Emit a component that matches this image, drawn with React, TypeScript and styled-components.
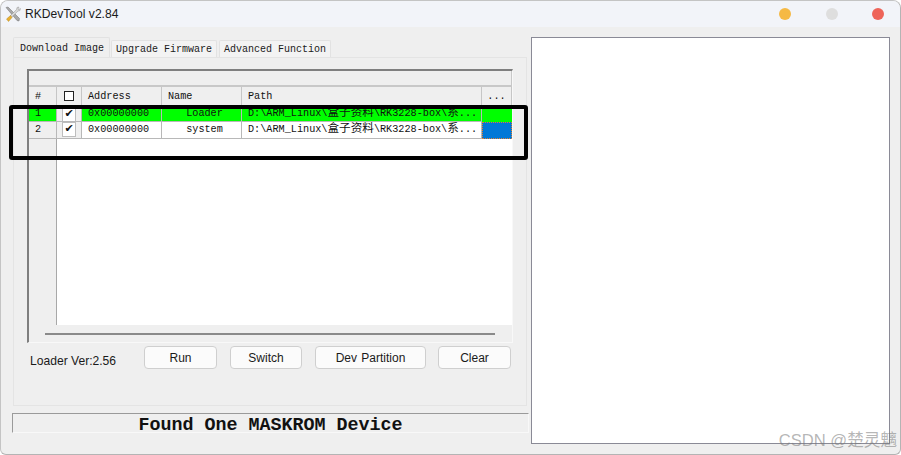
import { createGlobalStyle, styled } from "styled-components";

const COLUMNS = "28px 25px 80px 80px 240px 30px";

const rows = [
  { id: "1", address: "0x00000000", name: "Loader", active: true, height: 15 },
  { id: "2", address: "0x00000000", name: "system", active: false, height: 17 },
];

function App() {
  return (
    <>
      <GlobalStyle />
      <Window>
        <TitleBar>
          <AppIcon />
          <TitleText>RKDevTool v2.84</TitleText>
          <Lights>
            <Light $color="#f5b945" />
            <Light $color="#dedede" />
            <Light $color="#ee6459" />
          </Lights>
        </TitleBar>
        <Body>
          <LeftColumn>
            <TabStrip>
              <Tab $active>Download Image</Tab>
              <Tab>Upgrade Firmware</Tab>
              <Tab>Advanced Function</Tab>
            </TabStrip>
            <TabPanel>
              <Grid>
                <TopBand />
                <HeaderRow>
                  <HeaderCell>#</HeaderCell>
                  <HeaderCell $center>
                    <HeaderBox />
                  </HeaderCell>
                  <HeaderCell>Address</HeaderCell>
                  <HeaderCell>Name</HeaderCell>
                  <HeaderCell>Path</HeaderCell>
                  <HeaderCell $center>...</HeaderCell>
                </HeaderRow>
                {rows.map((row) => (
                  <DataRow key={row.id} $active={row.active} $height={row.height}>
                    <IndexCell $active={row.active}>{row.id}</IndexCell>
                    <CheckCell>
                      <CheckBox>✔</CheckBox>
                    </CheckCell>
                    <Cell>{row.address}</Cell>
                    <Cell $center>{row.name}</Cell>
                    <Cell>
                      D:\ARM_Linux\<Cjk>盒子资料</Cjk>\RK3228-box\<Cjk>系</Cjk>...
                    </Cell>
                    <PickCell $selected={!row.active} />
                  </DataRow>
                ))}
                <EmptyArea>
                  <EmptyGutter />
                </EmptyArea>
                <ScrollArea>
                  <ScrollThumb />
                </ScrollArea>
              </Grid>
              <ActionRow>
                <LoaderLabel>Loader Ver:2.56</LoaderLabel>
                <Button $width={73} $gap={0}>Run</Button>
                <Button $width={72} $gap={13}>Switch</Button>
                <Button $width={111} $gap={13}>Dev Partition</Button>
                <Button $width={73} $gap={12}>Clear</Button>
              </ActionRow>
            </TabPanel>
            <StatusBar>Found One MASKROM Device</StatusBar>
          </LeftColumn>
          <LogPanel />
        </Body>
        <Highlight />
        <Watermark>CSDN @楚灵魑</Watermark>
      </Window>
    </>
  );
}

function AppIcon() {
  return (
    <IconSvg viewBox="0 0 16 16">
      <path d="M1 1.5 L3 1 L14.5 12.5 L14 15 L12 14.5 Z" fill="#a8a8a8" stroke="#6e6e6e" strokeWidth="0.5" />
      <path d="M14 1 L12 1.5 L11.5 3.5 L5 10 L6.5 11.5 L13 5 L15 4.5 L15.5 2.5 L13.5 3.5 L13 3 Z" fill="#d6d6d6" stroke="#888" strokeWidth="0.4" />
      <path d="M5.5 9.5 L1.5 13 L3.5 15.5 L7 11.5 Z" fill="#e8b030" stroke="#a87c14" strokeWidth="0.4" />
    </IconSvg>
  );
}

export default App;

const GlobalStyle = createGlobalStyle`
  html, body {
    margin: 0;
    padding: 0;
    background: #ffffff;
    overflow: hidden;
  }
`;

const Window = styled.div`
  position: relative;
  width: 901px;
  height: 455px;
  box-sizing: border-box;
  background: #efefef;
  border: 1px solid #b4b4b4;
  border-top-color: #c4c4c4;
  border-left-color: #c4c4c4;
  border-radius: 8px 8px 6px 6px;
  overflow: hidden;
  font-family: "Liberation Sans", Arial, sans-serif;
`;

const TitleBar = styled.div`
  height: 26px;
  display: flex;
  align-items: center;
  padding-left: 4px;
  background: #f2f4f9;
`;

const IconSvg = styled.svg`
  width: 16px;
  height: 16px;
  flex: none;
`;

const TitleText = styled.span`
  margin-left: 4px;
  font-size: 12.1px;
  color: #1a1a1a;
`;

const Lights = styled.div`
  margin-left: auto;
  margin-right: 16px;
  display: flex;
  gap: 34.5px;
`;

const Light = styled.span<{ $color: string }>`
  width: 12px;
  height: 12px;
  border-radius: 50%;
  background: ${(p) => p.$color};
`;

const Body = styled.div`
  display: flex;
  align-items: flex-start;
  padding: 10px 11px 0 11px;
`;

const LeftColumn = styled.div`
  width: 517px;
  flex: none;
`;

const TabStrip = styled.div`
  display: flex;
  align-items: flex-end;
  height: 20px;
  padding-left: 1px;
  position: relative;
  z-index: 1;
`;

const Tab = styled.div<{ $active?: boolean }>`
  height: ${(p) => (p.$active ? 20 : 17)}px;
  box-sizing: border-box;
  padding: ${(p) => (p.$active ? "1px 5px 0 6px" : "1px 4px 0")};
  margin-right: ${(p) => (p.$active ? 1 : 2)}px;
  display: flex;
  align-items: center;
  font: 10px "Liberation Mono", monospace;
  color: #1a1a1a;
  white-space: nowrap;
  background: ${(p) => (p.$active ? "#efefef" : "#f3f3f3")};
  border: 1px solid #e2e2e2;
  border-bottom: none;
  border-radius: 2px 2px 0 0;
`;

const TabPanel = styled.div`
  width: 514px;
  height: 349px;
  box-sizing: border-box;
  margin-left: 1px;
  padding: 11px 13px 0 13px;
  border: 1px solid #e4e4e4;
  background: #efefef;
`;

const Grid = styled.div`
  width: 486px;
  height: 274px;
  box-sizing: border-box;
  display: flex;
  flex-direction: column;
  border-left: 2px solid #7f7f7f;
  border-top: 2px solid #7f7f7f;
  border-right: 1px solid #f8f8f8;
  border-bottom: 1px solid #f8f8f8;
  font: 10.2px "Liberation Mono", "Noto Sans CJK SC", monospace;
  color: #111;
`;

const TopBand = styled.div`
  height: 14px;
  flex: none;
  border-bottom: 2px solid #c8c8c8;
  border-right: 1px solid #c8c8c8;
`;

const HeaderRow = styled.div`
  display: grid;
  grid-template-columns: ${COLUMNS};
  height: 20px;
  flex: none;
`;

const HeaderCell = styled.div<{ $center?: boolean }>`
  display: flex;
  align-items: center;
  justify-content: ${(p) => (p.$center ? "center" : "flex-start")};
  padding: 0 0 1px ${(p) => (p.$center ? 0 : 6)}px;
  border-right: 1px solid #c6c6c6;
  border-bottom: 1px solid #c6c6c6;
`;

const HeaderBox = styled.span`
  width: 8px;
  height: 8px;
  border: 1px solid #222;
  background: #fff;
`;

const DataRow = styled.div<{ $active: boolean; $height: number }>`
  display: grid;
  grid-template-columns: ${COLUMNS};
  height: ${(p) => p.$height}px;
  flex: none;
  background: ${(p) => (p.$active ? "#00ff00" : "#ffffff")};
`;

const Cell = styled.div<{ $center?: boolean }>`
  display: flex;
  align-items: center;
  justify-content: ${(p) => (p.$center ? "center" : "flex-start")};
  padding: 0 0 2px 6px;
  white-space: nowrap;
  overflow: hidden;
  border-right: 1px solid #b8b8b8;
  border-bottom: 1px solid #b8b8b8;
`;

const Cjk = styled.span`
  font-size: 11.6px;
  line-height: 12px;
`;

const IndexCell = styled(Cell)<{ $active: boolean }>`
  background: ${(p) => (p.$active ? "#00ff00" : "#efefef")};
`;

const CheckCell = styled(Cell)`
  padding: 0;
  justify-content: center;
  align-items: flex-start;
  background: #efefef;
`;

const CheckBox = styled.span`
  width: 12px;
  height: 13px;
  display: flex;
  align-items: flex-start;
  justify-content: center;
  background: #fff;
  border: 1px solid #bdbdbd;
  font: 11px/12px "DejaVu Sans", sans-serif;
  color: #111;
`;

const PickCell = styled.div<{ $selected: boolean }>`
  box-sizing: border-box;
  background: ${(p) => (p.$selected ? "#0078d7" : "#00ff00")};
  border: 1px ${(p) => (p.$selected ? "dotted #e08030" : "solid #00ff00")};
`;

const EmptyArea = styled.div`
  flex: 1;
  display: flex;
  background: #ffffff;
`;

const EmptyGutter = styled.div`
  width: 28px;
  box-sizing: border-box;
  background: #efefef;
  border-right: 1px solid #a8a8a8;
`;

const ScrollArea = styled.div`
  height: 17px;
  flex: none;
  padding: 0 17px 0 16px;
  display: flex;
  align-items: center;
`;

const ScrollThumb = styled.div`
  height: 2px;
  width: 450px;
  background: #8a8a8a;
`;

const ActionRow = styled.div`
  display: flex;
  align-items: flex-start;
  padding-top: 3px;
  padding-left: 3px;
`;

const LoaderLabel = styled.span`
  width: 114px;
  margin-top: 8px;
  font-size: 12.1px;
  color: #1a1a1a;
  white-space: nowrap;
`;

const Button = styled.button<{ $width: number; $gap: number }>`
  width: ${(p) => p.$width}px;
  height: 23px;
  margin-left: ${(p) => p.$gap}px;
  padding: 0;
  background: #fbfbfb;
  border: 1px solid #cfcfcf;
  border-radius: 4px;
  font: 12px "Liberation Sans", Arial, sans-serif;
  word-spacing: 1px;
  color: #1a1a1a;
`;

const StatusBar = styled.div`
  height: 20px;
  box-sizing: border-box;
  margin-top: 7px;
  border: 1px solid #9a9a9a;
  border-right-color: #f8f8f8;
  border-bottom-color: #f8f8f8;
  text-align: center;
  font: bold 18.35px/23px "Liberation Mono", monospace;
  color: #111;
  white-space: nowrap;
`;

const LogPanel = styled.div`
  width: 359px;
  height: 407px;
  box-sizing: border-box;
  flex: none;
  margin-left: 2px;
  background: #ffffff;
  border: 1px solid #8a8a96;
`;

const Highlight = styled.div`
  position: absolute;
  left: 8px;
  top: 104px;
  width: 519px;
  height: 55px;
  box-sizing: border-box;
  border: 4px solid #000;
  border-radius: 3px;
  pointer-events: none;
`;

const Watermark = styled.div`
  position: absolute;
  right: 3px;
  bottom: 3px;
  font: 16.6px "Liberation Sans", "Noto Sans CJK SC", sans-serif;
  color: rgba(120, 120, 120, 0.55);
  white-space: nowrap;
`;
